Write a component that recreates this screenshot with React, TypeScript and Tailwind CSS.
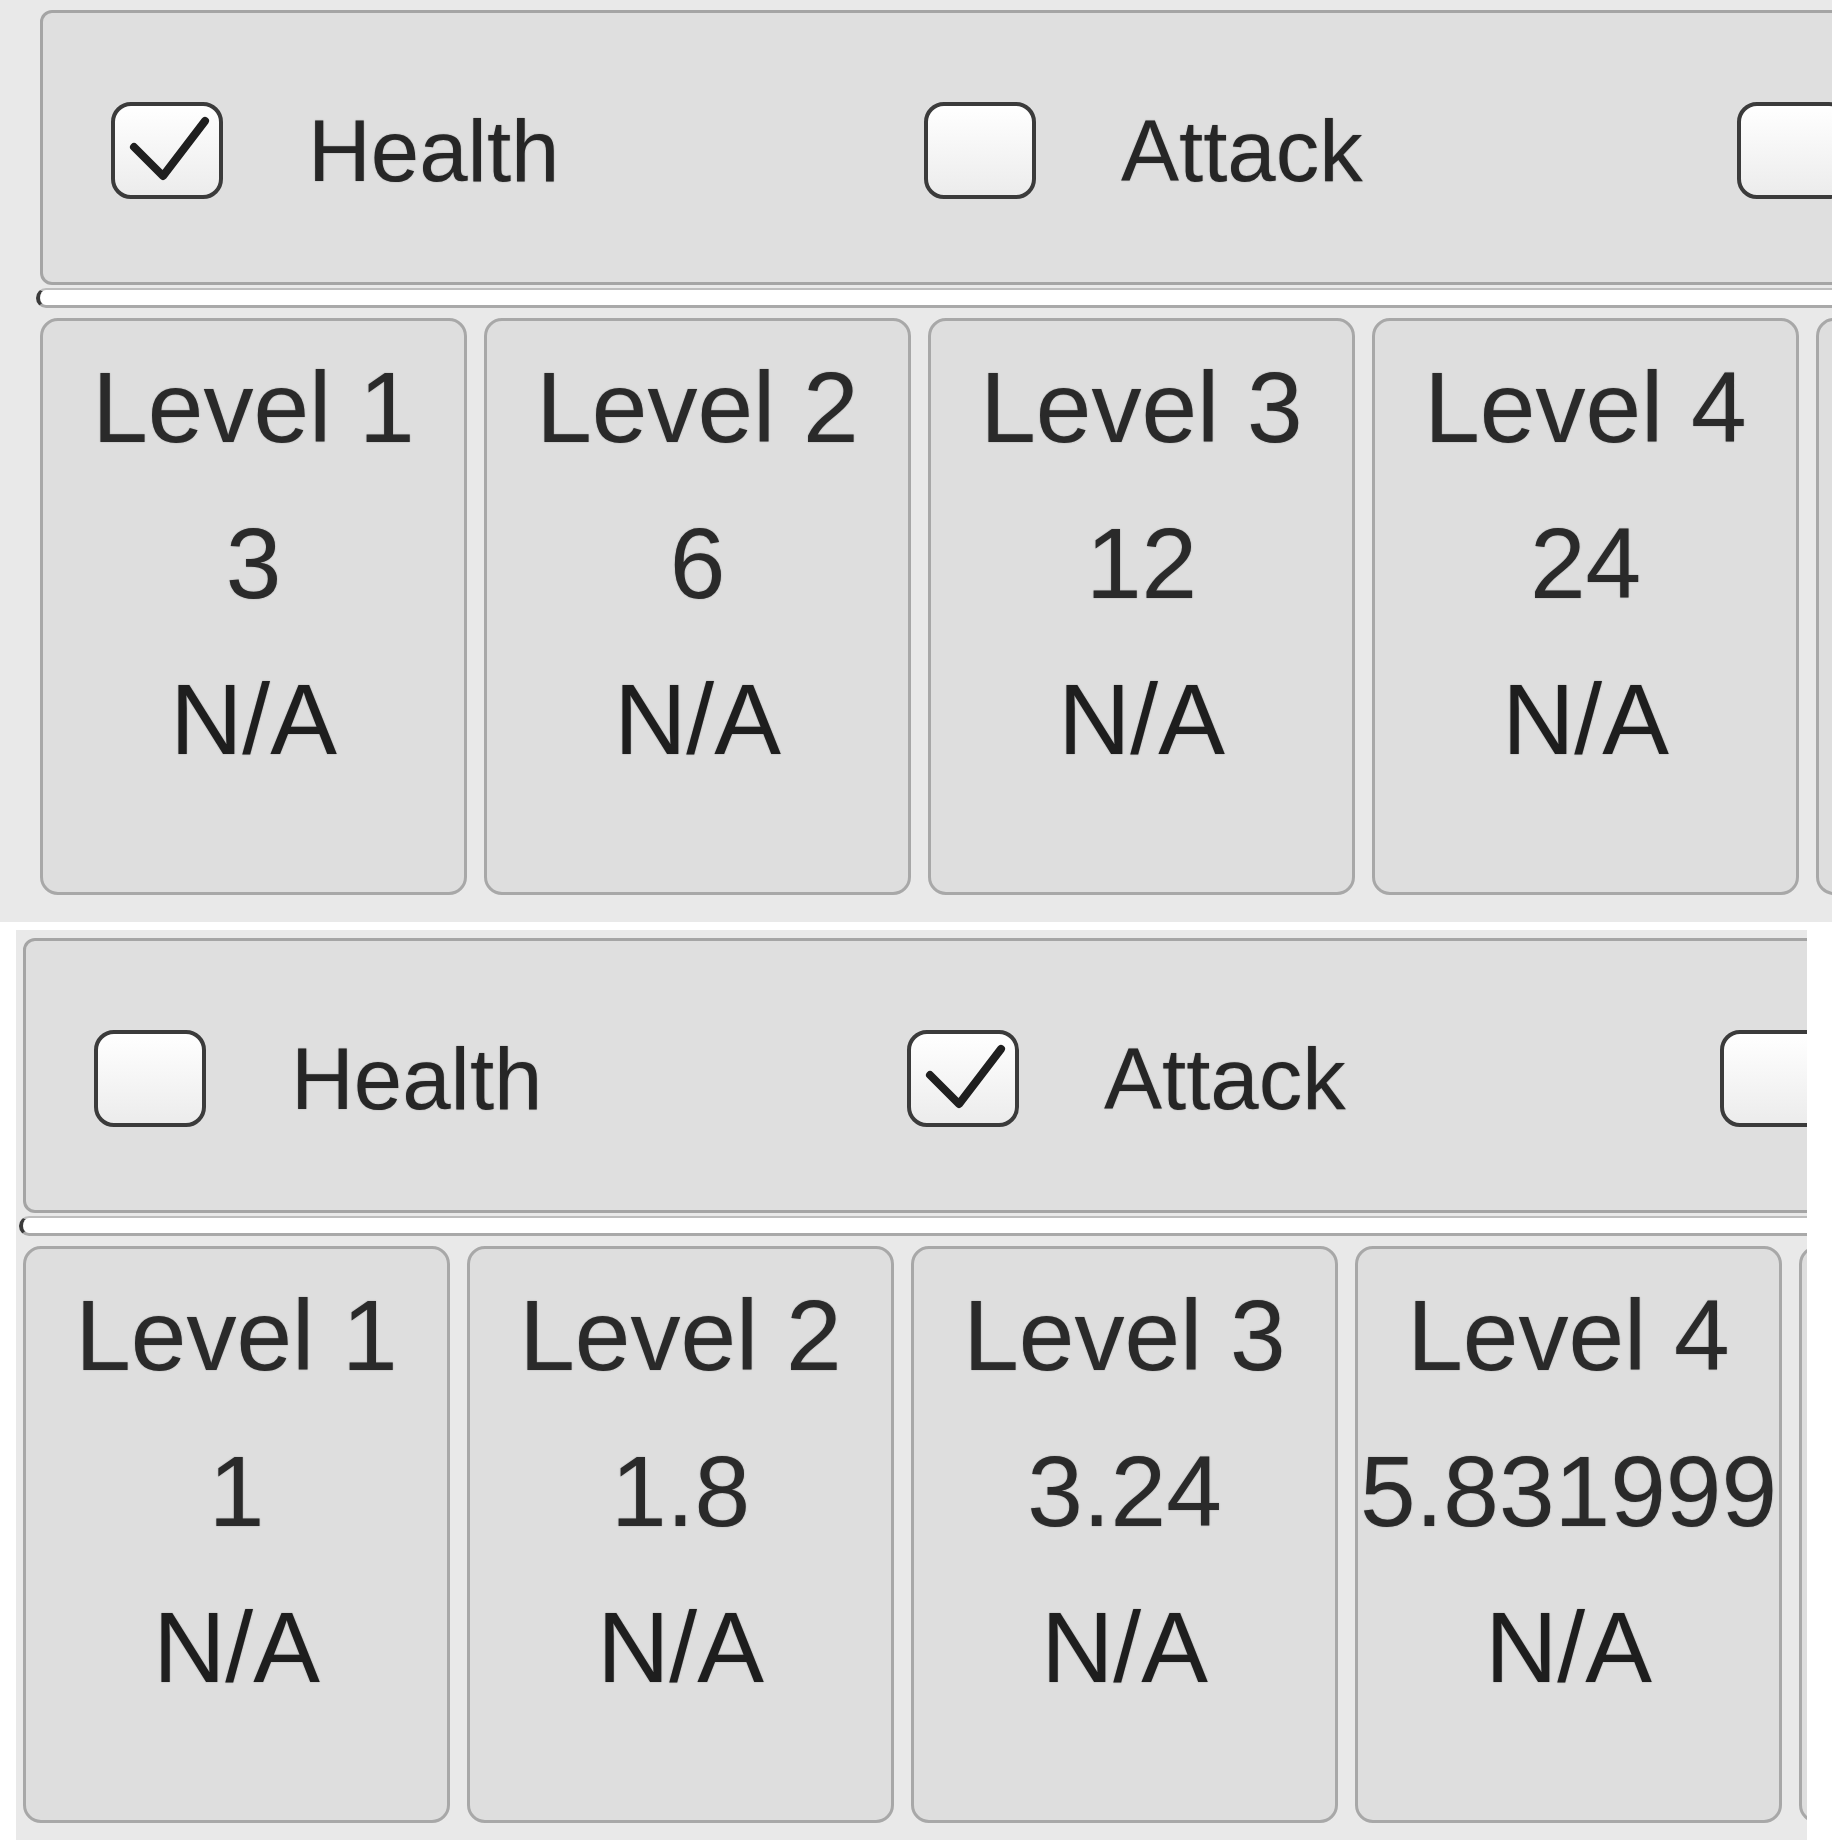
import React from "react";

type Props = {
  checked: number;
  values: string[];
};

// third stat is cut off by the window edge, only its box shows
const stats = ["Health", "Attack", ""];

function CheckBox({ on }: { on: boolean }) {
  return (
    <div className="w-[112px] h-[97px] shrink-0 rounded-[20px] border-[4px] border-[#3b3b3b] bg-gradient-to-b from-white to-[#ececec] relative">
      {on && (
        <svg className="absolute inset-0" width="104" height="89" viewBox="0 0 104 89">
          <path d="M19 41 L48 70 L90 15" fill="none" stroke="#1f1f1f" strokeWidth="8" strokeLinecap="round" strokeLinejoin="round" />
        </svg>
      )}
    </div>
  );
}

function LevelCard({ level, value }: { level: number; value: string }) {
  return (
    <div className="w-[427px] h-[577px] shrink-0 rounded-[18px] border-[3px] border-[#a8a8a8] bg-[#dedede] pt-[8px] text-center text-[100px] leading-[156px] text-[#2a2a2a] whitespace-nowrap [text-shadow:0_0_1.5px_rgba(0,0,0,0.35)]">
      {value !== "" && (
        <>
          <div>Level {level}</div>
          <div>{value}</div>
          <div className="text-[#1e1e1e]">N/A</div>
        </>
      )}
    </div>
  );
}

function StatPanel({ checked, values }: Props) {
  return (
    <div className="w-[2300px] shrink-0">
      <div className="h-[275px] rounded-[12px] border-[3px] border-[#a5a5a5] bg-[#dfdfdf] flex items-center pl-[68px] pt-[5px]">
        {stats.map((s, i) => (
          <div key={i} className="w-[813px] shrink-0 flex items-center gap-[85px]">
            <CheckBox on={i === checked} />
            {s && (
              <span className="text-[87px] leading-none text-[#262626] [text-shadow:0_0_1.5px_rgba(0,0,0,0.35)]">{s}</span>
            )}
          </div>
        ))}
      </div>
      <div className="mt-[3px] -ml-[4px] h-[20px] bg-white border-t-[2px] border-t-[#bdbdbd] border-b-[3px] border-b-[#a9a9a9] border-l-[4px] border-l-[#3a3a3a] rounded-l-[10px]" />
      <div className="mt-[10px] flex gap-[17px]">
        {values.map((v, i) => (
          <LevelCard key={i} level={i + 1} value={v} />
        ))}
      </div>
    </div>
  );
}

export default function App() {
  return (
    <div className="w-[1832px] h-[1840px] bg-white overflow-hidden font-['Liberation_Sans',Arial,sans-serif]">
      <div className="h-[922px] bg-[#e9e9e9] pl-[40px] pt-[10px] overflow-hidden flex">
        <StatPanel checked={0} values={["3", "6", "12", "24", ""]} />
      </div>
      <div className="pt-[8px]">
        <div className="ml-[16px] w-[1791px] h-[910px] bg-[#e9e9e9] pl-[7px] pt-[8px] overflow-hidden flex">
          <StatPanel checked={1} values={["1", "1.8", "3.24", "5.831999", ""]} />
        </div>
      </div>
    </div>
  );
}
